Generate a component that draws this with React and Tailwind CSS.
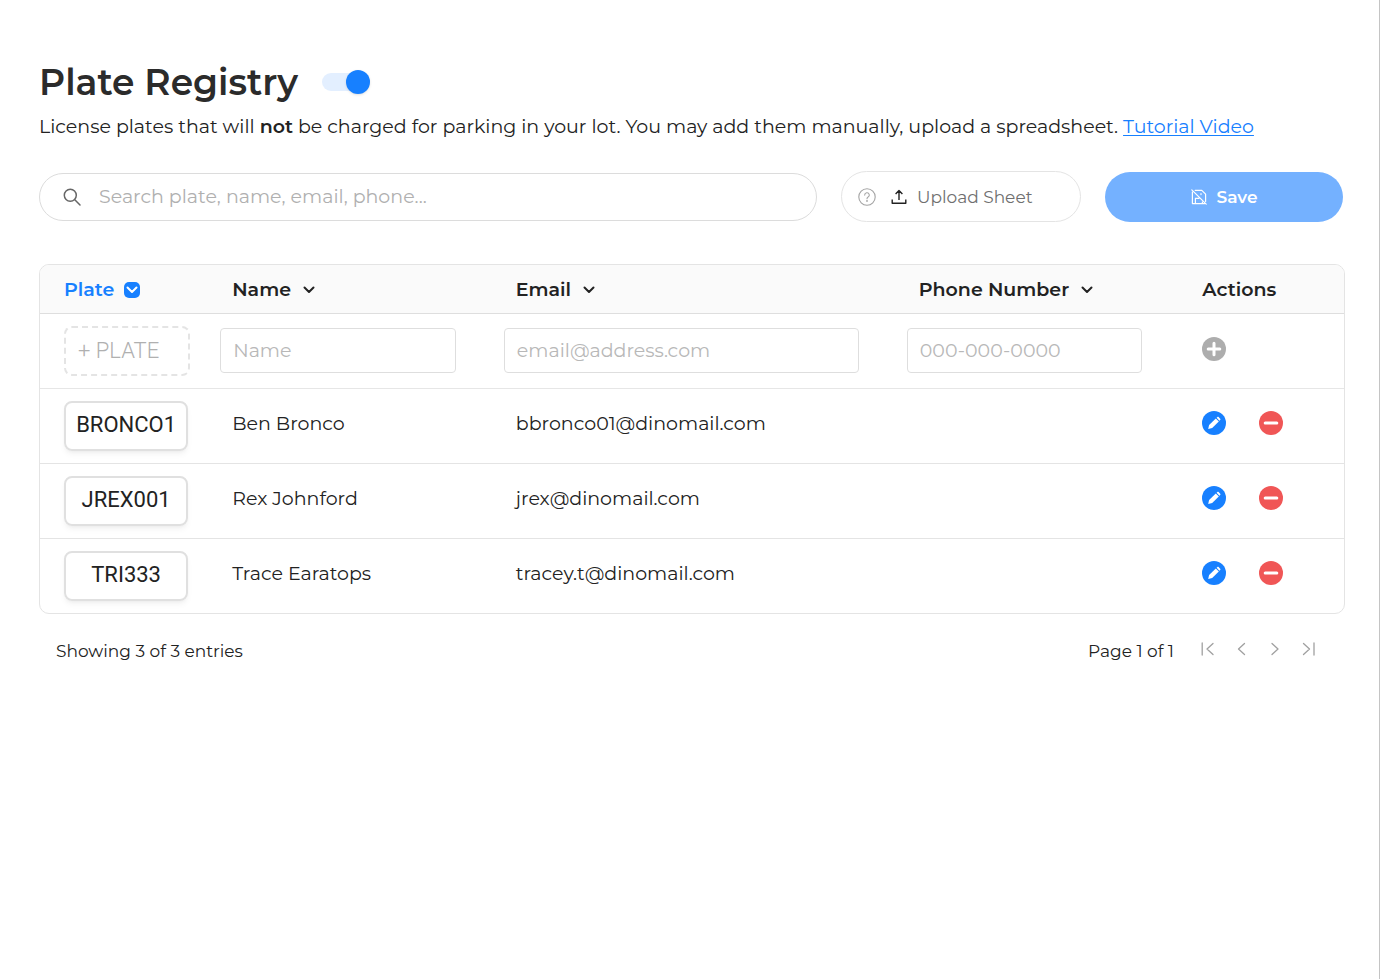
import React from "react";

const stroke = { fill: "none", stroke: "currentColor", strokeLinecap: "round", strokeLinejoin: "round", "aria-hidden": true };

const SearchIcon = () => (
  <svg {...stroke} className="size-[18px] shrink-0 text-[#666]" viewBox="0 0 18 18" strokeWidth="1.5">
    <circle cx="7.3" cy="7.3" r="6" />
    <path d="M11.8 11.8 17 17" />
  </svg>
);

const HelpIcon = () => (
  <svg {...stroke} className="size-[18px] shrink-0 text-[#a3a3a3]" viewBox="0 0 18 18" strokeWidth="1.1">
    <circle cx="9" cy="9" r="8.2" />
    <path d="M6.7 7.1a2.3 2.3 0 1 1 3.4 2c-.8.45-1.1.8-1.1 1.6" />
    <circle cx="9" cy="12.9" r=".35" fill="currentColor" />
  </svg>
);

const UploadIcon = () => (
  <svg {...stroke} className="size-4 shrink-0 text-[#222]" viewBox="0 0 16 16" strokeWidth="1.4" strokeLinecap="butt">
    <path d="M1.2 10.6v3.6h13.6v-3.6M8 11V1.8M4.6 5 8 1.6 11.4 5" />
  </svg>
);

const SaveOffIcon = () => (
  <svg {...stroke} className="size-4 shrink-0" viewBox="0 0 16 16" strokeWidth="1.2">
    <path d="M1.4 3v11.6h12.2M4.2 1.4h6.6l3.8 3.8v7.2M4.4 14.6V9.4h3.4M11.4 13v1.6M10 4.6v1M.8.8l14.4 14.4" />
  </svg>
);

const Chevron = () => (
  <svg {...stroke} className="h-2 w-3" viewBox="0 0 12 8" strokeWidth="2">
    <path d="M1.500 1.500 6 6l4.500-4.500" />
  </svg>
);

const PlusIcon = () => (
  <svg {...stroke} className="size-6" viewBox="0 0 24 24" strokeWidth="3">
    <path d="M12 6.200v11.600M6.200 12h11.600" />
  </svg>
);

const MinusIcon = () => (
  <svg {...stroke} className="size-6" viewBox="0 0 24 24" strokeWidth="3">
    <path d="M6.200 12h11.600" />
  </svg>
);

const PencilIcon = () => (
  <svg className="size-6" viewBox="0 0 24 24" fill="currentColor" aria-hidden="true">
    <path d="m6.200 18 .9-4 6.700-6.500 3 3-6.600 6.600z" />
    <path d="m14.600 6.800.8-.7c.4-.35.8-.35 1.200 0l1.600 1.600c.4.4.4.8 0 1.200l-.8.8z" />
  </svg>
);

const pagerPaths = [
  ["First page", "M3.200 2v12M14 2.500 8 8l6 5.500"],
  ["Previous page", "M11.500 2.500 5.500 8l6 5.500"],
  ["Next page", "M5 2.500 11 8l-6 5.500"],
  ["Last page", "M13 2v12M2.500 2.500 8.500 8l-6 5.500"],
];

const rows = [
  { plate: "BRONCO1", name: "Ben Bronco", email: "bbronco01@dinomail.com" },
  { plate: "JREX001", name: "Rex Johnford", email: "jrex@dinomail.com" },
  { plate: "TRI333", name: "Trace Earatops", email: "tracey.t@dinomail.com" },
];

const field =
  "block h-[45px] w-full rounded border border-[#dedede] bg-white px-3 text-[19px] outline-none placeholder:text-[#b8b8b8]";

export default function App() {
  return (
    <main className="min-h-screen border-r border-[#c4c4c4] bg-white pt-[58px] pr-[34px] pl-[39px] font-['Montserrat','Inter','Liberation_Sans',sans-serif] text-[#222]">
      <div className="flex items-center gap-6">
        <h1 className="text-[36px] leading-[48px] font-semibold text-[#2b2b2b]">Plate Registry</h1>
        <input
          type="checkbox"
          role="switch"
          defaultChecked
          aria-label="Enable plate registry"
          className="flex h-[18px] w-12 cursor-pointer appearance-none items-center justify-start rounded-full bg-[#e3efff] before:size-6 before:shrink-0 before:rounded-full before:bg-[#1780ff] before:shadow-sm checked:justify-end"
        />
      </div>
      <p className="mt-[5px] text-[19px] leading-8">
        License plates that will <strong className="font-semibold">not</strong> be charged for parking in your lot. You may add
        them manually, upload a spreadsheet.{" "}
        <a href="#tutorial" className="text-[#1780ff] underline underline-offset-2">
          Tutorial Video
        </a>
      </p>

      <div className="mt-7 flex items-center gap-6 pr-0.5">
        <label className="flex h-12 flex-1 items-center gap-[18px] rounded-full border border-[#dcdcdc] px-[23px]">
          <SearchIcon />
          <input
            type="search"
            aria-label="Search entries"
            placeholder="Search plate, name, email, phone..."
            className="min-w-0 flex-1 bg-transparent pt-0.5 text-[19px] outline-none placeholder:text-[#b0b0b0]"
          />
        </label>
        <button type="button" className="flex h-[51px] w-60 items-center rounded-full border border-[#e4e4e4] pl-4 text-[17px] text-[#6f6f6f]">
          <HelpIcon />
          <span className="ml-[15px] flex items-center gap-2.5">
            <UploadIcon />
            <span className="pt-0.5">Upload Sheet</span>
          </span>
        </button>
        <button type="button" className="flex h-[50px] w-[238px] items-center justify-center gap-2.5 rounded-full bg-[#74b1ff] text-[17px] font-semibold text-white">
          <SaveOffIcon />
          <span className="pt-0.5">Save</span>
        </button>
      </div>

      <div className="mt-[42px] overflow-hidden rounded-[10px] border border-[#e4e4e4]">
        <table className="w-full table-fixed border-collapse text-left">
          <colgroup>
            <col className="w-[12.900%]" />
            <col className="w-[21.750%]" />
            <col className="w-[30.900%]" />
            <col className="w-[21.750%]" />
            <col className="w-[12.700%]" />
          </colgroup>
          <thead className="bg-[#fafafa] text-[19px]">
            <tr className="h-12 border-b border-[#dedede]">
              <th className="pt-0.5 pl-6 font-semibold text-[#1780ff]">
                <button type="button" className="flex items-center gap-2.5">
                  Plate
                  <span className="flex size-4 items-center justify-center rounded-[5px] bg-[#1780ff] text-white">
                    <Chevron />
                  </span>
                </button>
              </th>
              {["Name", "Email", "Phone Number"].map((title) => (
                <th key={title} className="pt-0.5 pl-6 font-semibold">
                  <button type="button" className="flex items-center gap-3">
                    {title}
                    <Chevron />
                  </button>
                </th>
              ))}
              <th className="pt-0.5 pl-6 font-semibold">Actions</th>
            </tr>
          </thead>
          <tbody className="text-[19px]">
            <tr className="h-[75px] border-b border-[#e6e6e6]">
              <td className="pr-[18px] pl-6">
                <input
                  aria-label="Plate"
                  placeholder="+ PLATE"
                  className="block h-[50px] w-full rounded-lg border-2 border-dashed border-[#e4e4e4] px-3 font-['Roboto',sans-serif] text-[22px] font-light outline-none placeholder:text-[#b0b0b0]"
                />
              </td>
              <td className="pr-9 pl-3">
                <input aria-label="Name" placeholder="Name" className={field} />
              </td>
              <td className="pr-9 pl-3">
                <input type="email" aria-label="Email" placeholder="email@address.com" className={field} />
              </td>
              <td className="pr-9 pl-3">
                <input type="tel" aria-label="Phone number" placeholder="000-000-0000" className={field} />
              </td>
              <td className="pb-1 pl-6">
                <button type="button" aria-label="Add plate" className="block rounded-full bg-[#adadad] text-white">
                  <PlusIcon />
                </button>
              </td>
            </tr>
            {rows.map((row) => (
              <tr key={row.plate} className="h-[75px] border-b border-[#e4e4e4] last:border-b-0">
                <td className="pr-5 pl-6">
                  <div className="flex h-[50px] items-center justify-center rounded-lg border-2 border-[#e0e0e0] pb-0.5 font-['Roboto',sans-serif] text-[22px] shadow-md shadow-black/5">
                    {row.plate}
                  </div>
                </td>
                <td className="pb-[3px] pl-6">{row.name}</td>
                <td className="pb-[3px] pl-6">{row.email}</td>
                <td />
                <td className="pb-1.5 pl-6">
                  <div className="flex gap-[33px]">
                    <button type="button" aria-label={`Edit ${row.plate}`} className="rounded-full bg-[#1780ff] text-white">
                      <PencilIcon />
                    </button>
                    <button type="button" aria-label={`Remove ${row.plate}`} className="rounded-full bg-[#f05656] text-white">
                      <MinusIcon />
                    </button>
                  </div>
                </td>
              </tr>
            ))}
          </tbody>
        </table>
      </div>

      <footer className="mt-[23px] flex items-center justify-between pr-7 pl-[17px] text-[17px] leading-7">
        <p>Showing 3 of 3 entries</p>
        <div className="flex items-center gap-[25px]">
          <p>Page 1 of 1</p>
          <nav aria-label="Pagination" className="flex gap-[18px] pb-1">
            {pagerPaths.map(([label, d]) => (
              <button key={label} type="button" aria-label={label} className="text-[#a0a0a0]">
                <svg {...stroke} className="size-4" viewBox="0 0 16 16" strokeWidth="1.300">
                  <path d={d} />
                </svg>
              </button>
            ))}
          </nav>
        </div>
      </footer>
    </main>
  );
}
